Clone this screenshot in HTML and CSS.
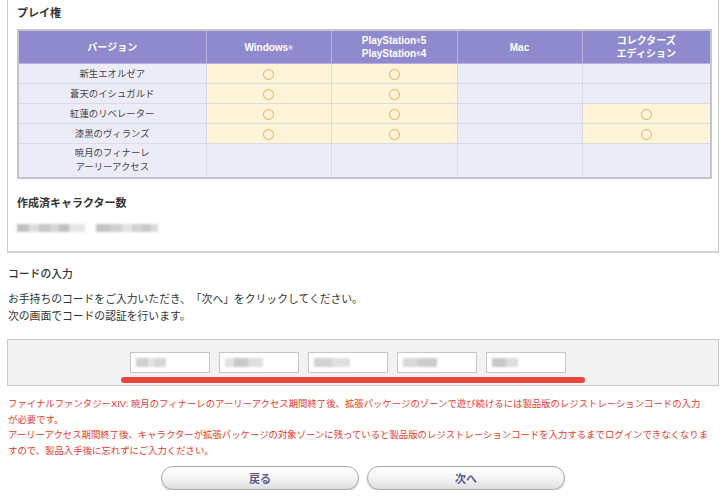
FILE: index.html
```html
<!DOCTYPE html>
<html lang="ja">
<head>
<meta charset="utf-8">
<title>コードの入力</title>
<link rel="stylesheet" href="styles.css">
</head>
<body>
<div class="page">
  <section class="box">
    <h3 class="box-title">プレイ権</h3>
    <table class="play-table">
      <colgroup>
        <col class="c-ver"><col class="c-win"><col class="c-ps"><col class="c-mac"><col class="c-ce">
      </colgroup>
      <thead>
        <tr>
          <th>バージョン</th>
          <th>Windows<sup class="reg">®</sup></th>
          <th>PlayStation<sup class="reg">®</sup>5<br>PlayStation<sup class="reg">®</sup>4</th>
          <th>Mac</th>
          <th>コレクターズ<br>エディション</th>
        </tr>
      </thead>
      <tbody>
        <tr><td>新生エオルゼア</td><td class="yes"><span class="mark"></span></td><td class="yes"><span class="mark"></span></td><td></td><td></td></tr>
        <tr><td>蒼天のイシュガルド</td><td class="yes"><span class="mark"></span></td><td class="yes"><span class="mark"></span></td><td></td><td></td></tr>
        <tr><td>紅蓮のリベレーター</td><td class="yes"><span class="mark"></span></td><td class="yes"><span class="mark"></span></td><td></td><td class="yes"><span class="mark"></span></td></tr>
        <tr><td>漆黒のヴィランズ</td><td class="yes"><span class="mark"></span></td><td class="yes"><span class="mark"></span></td><td></td><td class="yes"><span class="mark"></span></td></tr>
        <tr class="tall"><td>暁月のフィナーレ<br>アーリーアクセス</td><td></td><td></td><td></td><td></td></tr>
      </tbody>
    </table>
    <h3 class="box-title sub">作成済キャラクター数</h3>
    <div class="blur-row"><span class="blur b1"></span><span class="blur b2"></span></div>
  </section>

  <h2 class="section-title">コードの入力</h2>
  <p class="lead">お手持ちのコードをご入力いただき、「次へ」をクリックしてください。<br>次の画面でコードの認証を行います。</p>

  <div class="code-box">
    <div class="code-fields">
      <label class="code-field"><span class="code-blur w1"></span></label>
      <label class="code-field"><span class="code-blur w2"></span></label>
      <label class="code-field"><span class="code-blur w3"></span></label>
      <label class="code-field"><span class="code-blur w4"></span></label>
      <label class="code-field"><span class="code-blur w5"></span></label>
    </div>
    <span class="highlight"></span>
  </div>

  <div class="notes">
    <p>ファイナルファンタジーXIV: 暁月のフィナーレのアーリーアクセス期間終了後、拡張パッケージのゾーンで遊び続けるには製品版のレジストレーションコードの入力<br>が必要です。</p>
    <p>アーリーアクセス期間終了後、キャラクターが拡張パッケージの対象ゾーンに残っていると製品版のレジストレーションコードを入力するまでログインできなくなりま<br>すので、製品入手後に忘れずにご入力ください。</p>
  </div>

  <div class="actions">
    <button class="btn" type="button">戻る</button>
    <button class="btn" type="button">次へ</button>
  </div>
</div>
</body>
</html>
```

FILE: styles.css
```css
html, body {
  margin: 0;
  padding: 0;
  background: #ffffff;
}

body {
  font-family: "Liberation Sans", "Noto Sans CJK JP", sans-serif;
  color: #333333;
  font-size: 10.8px;
  text-spacing-trim: space-all;
}

.page {
  padding: 0 9px 0 7px;
}

/* ---------- upper box ---------- */
.box {
  border: 1px solid #c9c9c9;
  border-top: none;
  border-bottom: 2px solid #d2d2d2;
  padding: 5px 8px 15px 9px;
}

.box-title {
  margin: 0 0 8px;
  font-size: 11px;
  line-height: 16px;
  font-weight: 700;
  color: #333333;
}

.box-title.sub {
  margin: 16px 0 9px;
}

.play-table {
  width: 693px;
  border-collapse: collapse;
  border: 2px solid #c4c4cc;
  table-layout: fixed;
  font-size: 9.4px;
}

.c-ver { width: 188px; }
.c-win { width: 125px; }
.c-ps { width: 126px; }
.c-mac { width: 125px; }
.c-ce { width: 129px; }

.play-table th {
  background: #8e8acd;
  color: #ffffff;
  font-weight: 700;
  font-size: 10px;
  line-height: 13px;
  height: 32px;
  padding: 0;
  text-align: center;
  border: 1px solid #b5b2e2;
  border-top: none;
}

.reg {
  font-size: 6px;
  vertical-align: 1px;
  line-height: 0;
}

.play-table td {
  background: #ececf8;
  color: #444444;
  line-height: 14px;
  height: 20px;
  padding: 0;
  text-align: center;
  border: 1px solid #d9d9ea;
  box-sizing: border-box;
}

.play-table td.yes {
  background: #fff4d8;
}

.play-table tr.tall td {
  height: 33px;
  padding: 2px 0 3px;
}

.mark {
  display: inline-block;
  width: 9px;
  height: 9px;
  border: 1px solid #e4ac5e;
  border-radius: 50%;
  vertical-align: middle;
}

.blur-row {
  display: flex;
  gap: 11px;
  align-items: center;
  height: 16px;
}

.blur {
  display: block;
  height: 8px;
  filter: blur(1.2px);
}

.b1 {
  width: 68px;
  background: linear-gradient(90deg, #c2c2c2 0 18%, #dedede 18% 32%, #c6c6c6 32% 48%, #d6d6d6 48% 62%, #c0c0c0 62% 76%, #e6e6e6 76% 100%);
}

.b2 {
  width: 62px;
  background: linear-gradient(90deg, #c4c4c4 0 22%, #d0d0d0 22% 42%, #e4e4e4 42% 58%, #d2d2d2 58% 74%, #c8c8c8 74% 88%, #dddddd 88% 100%);
}

/* ---------- code section ---------- */
.section-title {
  margin: 13px 0 0 1px;
  font-size: 10.8px;
  line-height: 16px;
  font-weight: 500;
  color: #333333;
}

.lead {
  margin: 9px 0 0 1px;
  line-height: 17px;
  color: #333333;
}

.code-box {
  position: relative;
  margin-top: 14px;
  background: #f2f2f2;
  border: 1px solid #c8c8c8;
  padding: 12px 0 12px 122px;
}

.code-fields {
  display: flex;
  gap: 9px;
}

.code-field {
  display: flex;
  align-items: center;
  box-sizing: border-box;
  width: 80px;
  height: 21px;
  background: #ffffff;
  border: 1px solid #c6c6c6;
  padding-left: 5px;
}

.code-blur {
  display: block;
  height: 9px;
  filter: blur(1.3px);
}

.w1 { width: 30px; background: linear-gradient(90deg, #cfcfcf 0 40%, #e4e4e4 40% 60%, #d6d6d6 60% 100%); }
.w2 { width: 38px; background: linear-gradient(90deg, #e2e2e2 0 25%, #c8c8c8 25% 60%, #dedede 60% 100%); }
.w3 { width: 36px; background: linear-gradient(90deg, #d2d2d2 0 50%, #e0e0e0 50% 100%); }
.w4 { width: 34px; background: linear-gradient(90deg, #d8d8d8 0 45%, #cccccc 45% 100%); }
.w5 { width: 26px; background: linear-gradient(90deg, #c8c8c8 0 55%, #dcdcdc 55% 100%); }

.highlight {
  position: absolute;
  left: 113px;
  top: 37px;
  width: 464px;
  height: 6px;
  border-radius: 3px;
  background: #e8463b;
}

.notes {
  margin-top: 10px;
  color: #e83a2e;
  font-size: 9.4px;
  line-height: 15.6px;
}

.notes p {
  margin: 0 0 0 1px;
}

.actions {
  display: flex;
  justify-content: center;
  gap: 8px;
  margin-top: 8px;
}

.btn {
  width: 198px;
  height: 24px;
  border: 1px solid #a9a9a9;
  border-radius: 12px;
  background: linear-gradient(#ffffff 0%, #f4f4f4 50%, #dedede 100%);
  box-shadow: 0 1px 1px rgba(0, 0, 0, 0.25);
  font-family: "Liberation Sans", "Noto Sans CJK JP", sans-serif;
  font-size: 11px;
  font-weight: 700;
  color: #5b5992;
  padding: 0;
}
```
